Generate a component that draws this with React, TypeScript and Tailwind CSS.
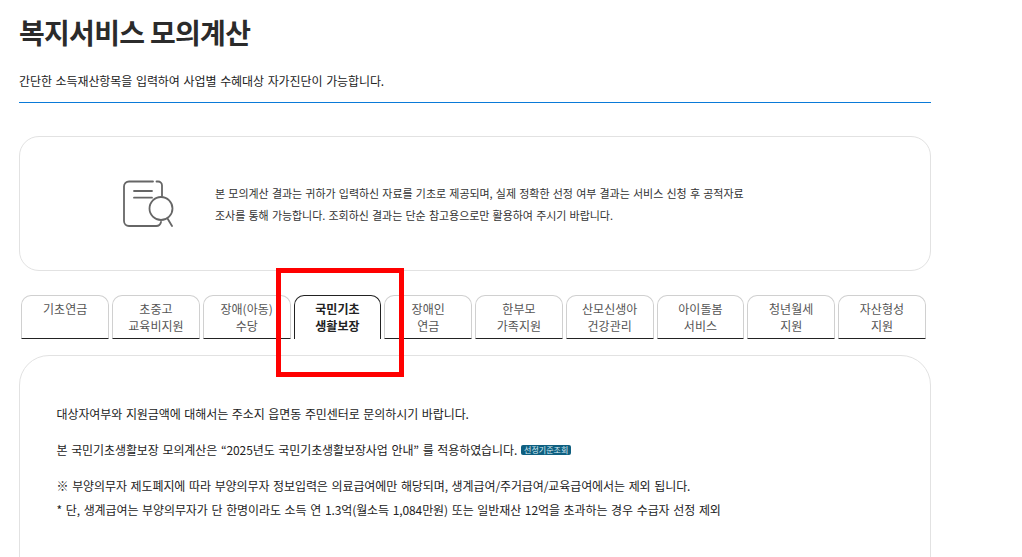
const tabs = [
  ["기초연금"],
  ["초중고", "교육비지원"],
  ["장애(아동)", "수당"],
  ["국민기초", "생활보장"],
  ["장애인", "연금"],
  ["한부모", "가족지원"],
  ["산모신생아", "건강관리"],
  ["아이돌봄", "서비스"],
  ["청년월세", "지원"],
  ["자산형성", "지원"],
];

function SearchDocIcon() {
  return (
    <svg width="52" height="47" viewBox="0 0 52 47" fill="none" stroke="#666" strokeWidth="1.8" strokeLinecap="round">
      <path d="M30 1.5H6a5 5 0 0 0-5 5v34.5a5 5 0 0 0 5 5h27a5 5 0 0 0 5-4" />
      <path d="M33.5 1.5h1.5a4 4 0 0 1 4 4v10.5" />
      <path d="M11 11h18M11 17.7h18" />
      <circle cx="38" cy="28.5" r="11.5" />
      <path d="M44.5 38.5l4.5 7.5" />
    </svg>
  );
}

export default function App() {
  return (
    <div className="relative h-[557px] w-[1022px] overflow-hidden bg-white font-['Noto_Sans_CJK_KR','Noto_Sans',sans-serif] text-[#222]">
      <div className="ml-[19px] w-[912px]">
        {/* Header */}
        <h1 className="pt-[12px] text-[28px] leading-[40px] font-bold tracking-[-0.7px] text-[#2b2b2b]">복지서비스 모의계산</h1>
        <p className="mt-[19px] border-b border-[#0a7ad8] pb-[11px] text-[12px] leading-[20px] tracking-[-0.1px] [word-spacing:1.2px]">
          간단한 소득재산항목을 입력하여 사업별 수혜대상 자가진단이 가능합니다.
        </p>

        {/* Notice card */}
        <div className="mt-[33px] flex h-[135px] items-center rounded-[20px] border border-[#e2e2e2] pl-[103px]">
          <SearchDocIcon />
          <div className="ml-[40px] text-[11px] leading-[22px] tracking-[-0.05px] text-[#333] [word-spacing:0.85px]">
            <p>본 모의계산 결과는 귀하가 입력하신 자료를 기초로 제공되며, 실제 정확한 선정 여부 결과는 서비스 신청 후 공적자료</p>
            <p>조사를 통해 가능합니다. 조회하신 결과는 단순 참고용으로만 활용하여 주시기 바랍니다.</p>
          </div>
        </div>

        {/* Tabs */}
        <div className="mt-[24px] ml-[2.3px] flex gap-[3px]">
          {tabs.map((lines, i) => (
            <div
              key={i}
              className={
                i === 3
                  ? "h-[44px] w-[87.75px] rounded-t-[10px] border border-b-0 border-[#222] pt-[4px] text-center text-[12px] leading-[17px] font-bold text-[#222]"
                  : "h-[44px] w-[87.75px] rounded-t-[10px] border border-[#d0d0d0] border-b-[#222] pt-[4px] text-center text-[12px] leading-[17px] text-[#555]"
              }
            >
              {lines.map((line) => (
                <div key={line}>{line}</div>
              ))}
            </div>
          ))}
        </div>

        {/* Panel */}
        <div className="mt-[16px] h-[260px] rounded-[30px] border border-[#e2e2e2] pt-[48px] pl-[36.5px] text-[12px] leading-[20px] tracking-[-0.1px] text-[#222] [word-spacing:1.15px]">
          <p>대상자여부와 지원금액에 대해서는 주소지 읍면동 주민센터로 문의하시기 바랍니다.</p>
          <p className="mt-[16px] flex items-center">
            본 국민기초생활보장 모의계산은 “2025년도 국민기초생활보장사업 안내” 를 적용하였습니다.
            <span className="ml-[4px] inline-block h-[10px] w-[50px] rounded-[2px] bg-[#0f5f80] text-center text-[8px] leading-[10px] tracking-normal text-[#d8eef5]">선정기준조회</span>
          </p>
          <p className="mt-[16px]">※ 부양의무자 제도폐지에 따라 부양의무자 정보입력은 의료급여에만 해당되며, 생계급여/주거급여/교육급여에서는 제외 됩니다.</p>
          <p className="mt-[4px]">* 단, 생계급여는 부양의무자가 단 한명이라도 소득 연 1.3억(월소득 1,084만원) 또는 일반재산 12억을 초과하는 경우 수급자 선정 제외</p>
        </div>
      </div>

      {/* Red highlight box */}
      <div className="absolute top-[268px] left-[276px] h-[109px] w-[128px] border-[5px] border-[#ff0000]" />
    </div>
  );
}
